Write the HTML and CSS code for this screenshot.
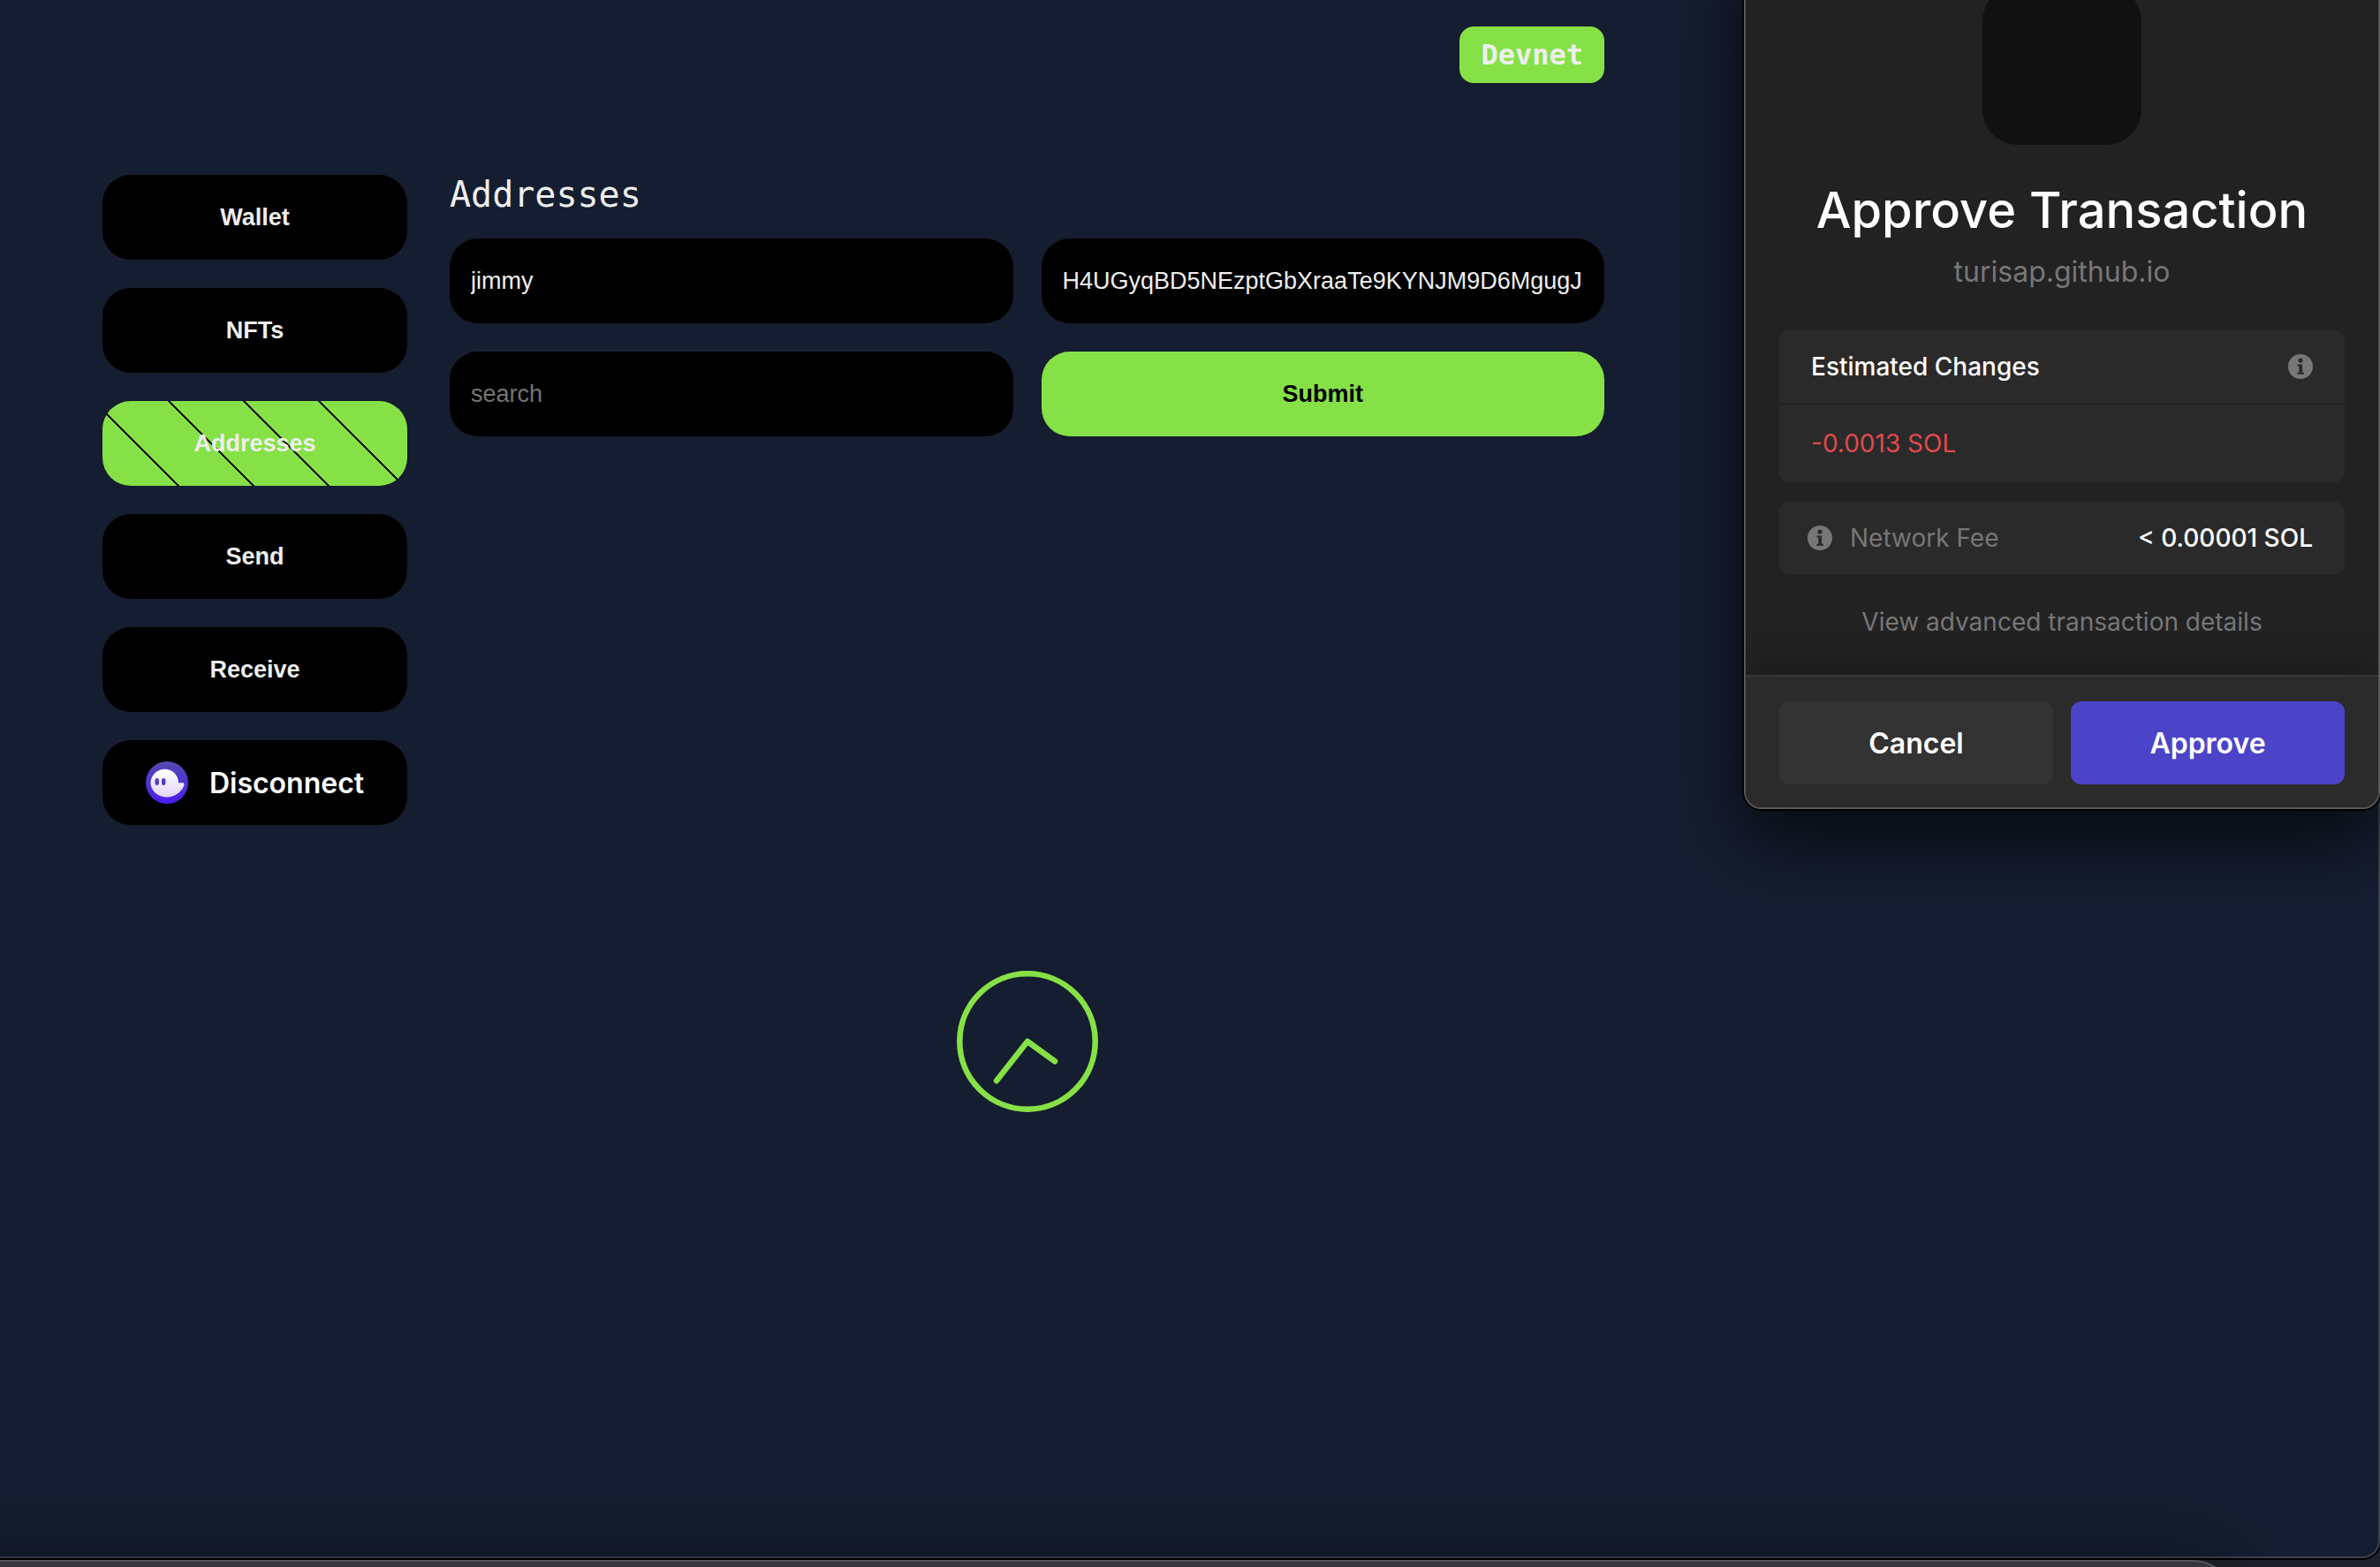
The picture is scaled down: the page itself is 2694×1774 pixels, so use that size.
FILE: index.html
```html
<!DOCTYPE html>
<html lang="en">
<head>
<meta charset="utf-8">
<title>Addresses</title>
<link rel="stylesheet" href="styles.css">
</head>
<body>
<svg class="defs" aria-hidden="true">
  <symbol id="info" viewBox="0 0 28 28">
    <circle cx="14" cy="14" r="14" fill="#777777"/>
    <circle cx="14" cy="7" r="2.6" fill="#2a2a2a"/>
    <path d="M10.5 11.5h5.6v9.3h1.9v2h-7.6v-2h1.9v-7.3h-1.8z" fill="#2a2a2a"/>
  </symbol>
</svg>
<div class="desktop">
  <div class="app">
    <header class="topbar"><span class="badge">Devnet</span></header>
    <div class="columns">
      <nav class="menu" aria-label="Main">
        <button class="pill" type="button">Wallet</button>
        <button class="pill" type="button">NFTs</button>
        <button class="pill pill-active" type="button">Addresses</button>
        <button class="pill" type="button">Send</button>
        <button class="pill" type="button">Receive</button>
        <button class="pill pill-wallet" type="button">
          <svg class="ghost" viewBox="0 0 48 48" aria-hidden="true">
            <defs>
              <linearGradient id="disc" x1="0" y1="0" x2="0" y2="1"><stop offset="0" stop-color="#534bb1"/><stop offset="1" stop-color="#4a1cf0"/></linearGradient>
              <linearGradient id="body" x1="0" y1="0" x2="0" y2="1"><stop offset="0" stop-color="#ffffff"/><stop offset="1" stop-color="#e0d6fa"/></linearGradient>
            </defs>
            <circle cx="24" cy="24" r="24" fill="url(#disc)"/>
            <path d="M42.200 24.200h-5.200C37 15.600 30.200 8.800 21.600 8.800 12.800 8.800 5.800 15.600 5.500 24.100 5.300 32.900 13.700 40.500 22.700 40.500h1.200c8 0 17.700-6.200 19.500-13.800.3-1.400-.2-2.500-1.200-2.500z" fill="url(#body)"/>
            <rect x="10.500" y="19" width="4.400" height="8" rx="2.200" fill="#5040c0"/>
            <rect x="18" y="19" width="4.400" height="8" rx="2.200" fill="#5040c0"/>
          </svg>
          Disconnect
        </button>
      </nav>
      <main class="content">
        <h1 class="title">Addresses</h1>
        <form class="form">
          <input class="field" type="text" aria-label="Name" value="jimmy">
          <input class="field" type="text" aria-label="Address" value="H4UGyqBD5NEzptGbXraaTe9KYNJM9D6MgugJ8">
          <input class="field" type="text" aria-label="Search" placeholder="search">
          <button class="submit" type="button">Submit</button>
        </form>
        <svg class="loader" viewBox="0 0 160 160" role="img" aria-label="Loading">
          <circle cx="80" cy="80" r="76.700"/>
          <path d="M45 124.500 80 80l31 22.500"/>
        </svg>
      </main>
    </div>
  </div>

  <div class="back-window"></div>

  <section class="popup" aria-labelledby="popup-title">
    <div class="popup-body">
      <div class="site-icon"></div>
      <h2 class="popup-title" id="popup-title">Approve Transaction</h2>
      <p class="site">turisap.github.io</p>
      <div class="card">
        <div class="row"><span>Estimated Changes</span><svg class="info" aria-hidden="true"><use href="#info"/></svg></div>
        <div class="row row-change">-0.0013 SOL</div>
      </div>
      <div class="card">
        <div class="row row-fee"><span class="fee-label"><svg class="info" aria-hidden="true"><use href="#info"/></svg>Network Fee</span><span>&lt; 0.00001 SOL</span></div>
      </div>
      <a class="details" href="#">View advanced transaction details</a>
    </div>
    <footer class="actions">
      <button class="action" type="button">Cancel</button>
      <button class="action action-primary" type="button">Approve</button>
    </footer>
  </section>
</div>
</body>
</html>
```
FILE: styles.css
```css
* { box-sizing: border-box; }

body {
  margin: 0;
  background: #1f222b;
}

button, input {
  border: 0;
  margin: 0;
  font: inherit;
}

.defs {
  position: absolute;
  width: 0;
  height: 0;
}

.desktop {
  position: relative;
  height: 100vh;
  overflow: hidden;
  padding-bottom: 10px;
  font-family: "Liberation Sans", Arial, sans-serif;
  font-size: 27px;
  color: #eeeeee;
}

/* Main browser window */
.app {
  height: 100%;
  padding: 30px 876px 0 116px;
  background: #151d30;
  border: solid #3b424e;
  border-width: 0 2px 2px 0;
  border-radius: 0 0 20px 0;
  box-shadow: 0 0 0 2px #000000;
}

.topbar {
  display: flex;
  justify-content: flex-end;
}

.badge {
  padding: 0 24px;
  border-radius: 16px;
  background: #86e146;
  font: bold 32px/64px "DejaVu Sans Mono", monospace;
}

.columns {
  display: grid;
  grid-template-columns: 345px 1fr;
  gap: 48px;
  margin-top: 104px;
}

.menu {
  display: grid;
  gap: 32px;
  align-content: start;
}

.pill {
  display: flex;
  align-items: center;
  justify-content: center;
  height: 96px;
  border-radius: 32px;
  background: #000000;
  color: #eeeeee;
  font-weight: bold;
}

.pill-active {
  background: repeating-linear-gradient(45deg, #111111 0 2px, #86e146 2px 60px);
}

.pill-wallet {
  gap: 24px;
  color: #ffffff;
  font: 600 32px "Inter", sans-serif;
}

.ghost {
  width: 48px;
  height: 48px;
}

.title {
  margin: 0 0 28px;
  font: 400 40px/44px "DejaVu Sans Mono", monospace;
}

.form {
  display: grid;
  grid-template-columns: 1fr 1fr;
  gap: 32px;
}

.field, .submit {
  width: 100%;
  height: 96px;
  padding: 0 24px;
  border-radius: 32px;
  background: #000000;
  color: #eeeeee;
}

.field::placeholder {
  color: #757575;
  opacity: 1;
}

.submit {
  background: #86e146;
  color: #000000;
  font-weight: bold;
}

.loader {
  display: block;
  width: 160px;
  height: 160px;
  margin: 605px auto 0;
  fill: none;
  stroke: #86e146;
  stroke-width: 6.5;
  stroke-linecap: round;
  stroke-linejoin: round;
}

/* Window peeking in along the bottom edge */
.back-window {
  position: absolute;
  left: -200px;
  right: 164px;
  bottom: -190px;
  height: 198px;
  border: 2px solid #54545c;
  border-radius: 48px;
  background: #373640;
  box-shadow: 0 0 96px rgba(0, 0, 0, 0.35);
}

/* Wallet popup, partly above the visible desktop */
.popup {
  position: absolute;
  top: -64px;
  right: 0;
  width: 720px;
  border: 2px solid #575757;
  border-radius: 20px;
  overflow: hidden;
  background: #222222;
  color: #ffffff;
  font-family: "Inter", sans-serif;
  font-size: 28px;
  font-weight: 500;
  box-shadow: 0 0 0 2px #000000, 0 32px 84px rgba(0, 0, 0, 0.7);
}

.popup-body {
  display: flex;
  flex-direction: column;
  padding: 46px 38px 40px;
}

.site-icon {
  width: 180px;
  height: 180px;
  align-self: center;
  border-radius: 40px;
  background: #111111;
}

.popup-title {
  margin: 40px 0 0;
  font-size: 56px;
  line-height: 68px;
  font-weight: 500;
  text-align: center;
}

.site {
  margin: 16px 0 46px;
  font-size: 32px;
  line-height: 40px;
  font-weight: 400;
  text-align: center;
  color: #777777;
}

.card {
  display: grid;
  gap: 2px;
  margin-bottom: 22px;
  border-radius: 12px;
  overflow: hidden;
}

.row {
  display: flex;
  align-items: center;
  justify-content: space-between;
  height: 82px;
  padding: 0 36px;
  background: #2a2a2a;
}

.row-change {
  height: 88px;
  color: #e04a4c;
  font-weight: 400;
}

.row-fee { padding-left: 32px; }

.fee-label {
  display: flex;
  align-items: center;
  gap: 20px;
  font-weight: 400;
  color: #777777;
}

.info {
  display: block;
  width: 28px;
  height: 28px;
}

.details {
  margin-top: 12px;
  line-height: 40px;
  font-weight: 400;
  text-align: center;
  text-decoration: none;
  color: #777777;
}

.actions {
  display: grid;
  grid-template-columns: 1fr 1fr;
  gap: 20px;
  padding: 28px 38px 26px;
  border-top: 2px solid #363636;
  background: #2b2b2b;
  box-shadow: 0 0 40px rgba(0, 0, 0, 0.4);
}

.action {
  height: 94px;
  border-radius: 12px;
  background: #333333;
  color: #ffffff;
  font-size: 32px;
  font-weight: 600;
}

.action-primary { background: #4c44c8; }
```
